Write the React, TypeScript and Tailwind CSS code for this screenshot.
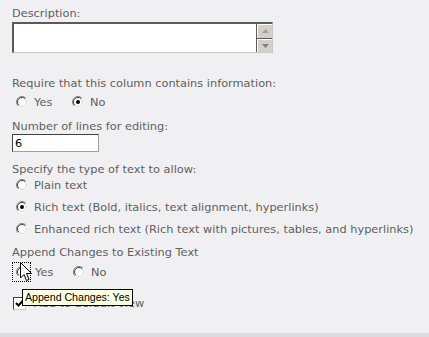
import React from 'react';

function Radio({ checked = false }: { checked?: boolean }) {
  return (
    <svg width="12" height="12" viewBox="0 0 12 12" className="shrink-0">
      <circle cx="6" cy="6" r="5.5" fill="#ffffff" />
      <path d="M2.1 9.9 A5.5 5.5 0 0 1 9.9 2.1" fill="none" stroke="#808080" strokeWidth="1" />
      <path d="M9.9 2.1 A5.5 5.5 0 0 1 2.1 9.9" fill="none" stroke="#ffffff" strokeWidth="1" />
      <path d="M2.8 9.2 A4.5 4.5 0 0 1 9.2 2.8" fill="none" stroke="#404040" strokeWidth="1" />
      <path d="M9.2 2.8 A4.5 4.5 0 0 1 2.8 9.2" fill="none" stroke="#d4d0c8" strokeWidth="1" />
      {checked && <circle cx="6" cy="6" r="2" fill="#000000" />}
    </svg>
  );
}

function Option({ label, checked, className = '' }: { label: string; checked?: boolean; className?: string }) {
  return (
    <label className={`flex items-center gap-[6px] ${className}`}>
      <Radio checked={checked} />
      <span>{label}</span>
    </label>
  );
}

export default function App() {
  return (
    <div className="w-[429px] h-[337px] bg-[#f0f0f2] relative overflow-hidden flex flex-col font-['DejaVu_Sans',sans-serif] text-[11.35px] leading-[14px] text-[#5f5f5f]">
      <div className="flex-1 pl-3 pt-[6px]">
        <div>Description:</div>
        {/* textarea with scroll buttons */}
        <div className="mt-[2px] w-[261px] h-[31px] flex bg-white border-t-2 border-l-2 border-t-[#5a5a5a] border-l-[#5a5a5a] border-b border-r border-b-[#c8c8c8] border-r-[#c8c8c8]">
          <div className="flex-1" />
          <div className="w-[16px] flex flex-col gap-[1px] bg-[#5a5a5a] border-l border-[#5a5a5a]">
            <div className="flex-1 bg-[#d4d0c8] flex items-center justify-center border-t border-l border-white">
              <svg width="7" height="4" viewBox="0 0 7 4"><path d="M3.5 0 L7 4 L0 4 Z" fill="#a0a0a0" /></svg>
            </div>
            <div className="flex-1 bg-[#d4d0c8] flex items-center justify-center border-t border-l border-white">
              <svg width="7" height="4" viewBox="0 0 7 4"><path d="M0 0 L7 0 L3.5 4 Z" fill="#808080" /></svg>
            </div>
          </div>
        </div>

        <div className="mt-[23px]">Require that this column contains information:</div>
        <div className="flex items-center mt-[5px] pl-[4px] h-[14px]">
          <Option label="Yes" className="w-[56px]" />
          <Option label="No" checked />
        </div>

        <div className="mt-[10px]">Number of lines for editing:</div>
        <div className="mt-[1px] w-[87px] h-[18px] bg-white border-t border-l border-[#404040] border-r border-b border-r-[#a0a0a0] border-b-[#a0a0a0] flex items-center pl-[2px] text-black">
          6
        </div>

        <div className="mt-[10px]">Specify the type of text to allow:</div>
        <div className="flex flex-col gap-[8px] mt-[2px] pl-[4px]">
          <Option label="Plain text" />
          <Option label="Rich text (Bold, italics, text alignment, hyperlinks)" checked />
          <Option label="Enhanced rich text (Rich text with pictures, tables, and hyperlinks)" />
        </div>

        <div className="mt-[9px]">Append Changes to Existing Text</div>
        <div className="flex items-center mt-[3px] h-[20px]">
          <span className="w-[19px] h-[20px] border border-dotted border-black flex items-center justify-center">
            <Radio checked />
          </span>
          <span className="ml-[4px] w-[38px]">Yes</span>
          <Option label="No" />
        </div>

        <div className="flex items-center gap-[8px] mt-[14px] pl-[1px]">
          <span className="w-[13px] h-[13px] bg-white border-t border-l border-[#404040] border-r border-b border-r-[#d4d0c8] border-b-[#d4d0c8] flex items-center justify-center">
            <svg width="9" height="9" viewBox="0 0 9 9"><path d="M1 4 L3.5 6.5 L8 1.5" fill="none" stroke="#000" strokeWidth="2" /></svg>
          </span>
          <span>Add to default view</span>
        </div>
      </div>
      <div className="h-[4px] bg-[#dcdcde]" />

      {/* mouse pointer */}
      <svg className="absolute left-[20px] top-[262px]" width="13" height="20" viewBox="0 0 13 20">
        <path d="M0.5 0.5 L0.5 16 L4 12.5 L6.5 18.5 L9 17.5 L6.5 11.5 L11.5 11.5 Z" fill="#ffffff" stroke="#000000" strokeWidth="1" strokeLinejoin="miter" />
      </svg>

      {/* tooltip */}
      <div className="absolute left-[22px] top-[289px] h-[17px] px-[2px] bg-[#ffffe1] border border-black text-black font-['Liberation_Sans',sans-serif] text-[10.6px] leading-[15px] whitespace-nowrap">
        Append Changes: Yes
      </div>
    </div>
  );
}
